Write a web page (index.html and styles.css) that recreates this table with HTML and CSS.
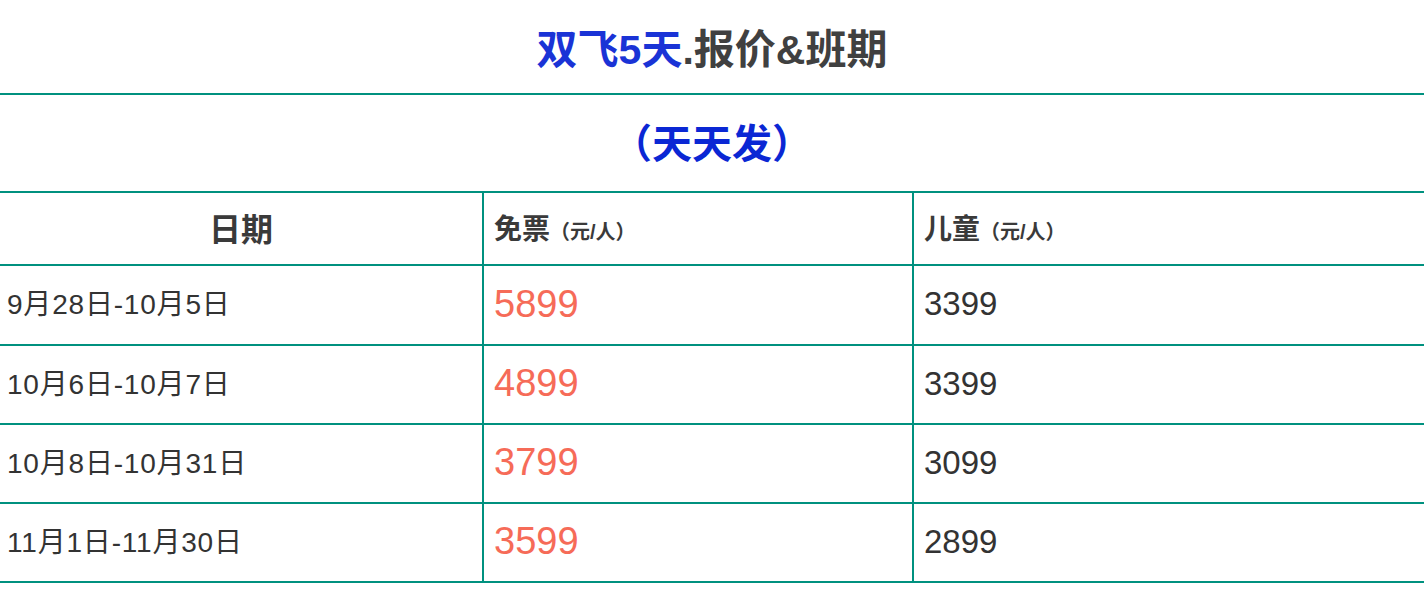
FILE: index.html
```html
<!DOCTYPE html>
<html lang="zh-CN">
<head>
<meta charset="utf-8">
<title>双飞5天.报价&amp;班期</title>
<link rel="stylesheet" href="styles.css">
</head>
<body>
<div class="page">
  <h1 class="title"><span class="blue">双飞5天</span>.报价&amp;班期</h1>
  <table class="price-table">
    <colgroup>
      <col class="c1"><col class="c2"><col class="c3">
    </colgroup>
    <tr class="sub-row"><td colspan="3" class="sub">（天天发）</td></tr>
    <tr class="head-row">
      <th class="center">日期</th>
      <th>免票<small>（元/人）</small></th>
      <th>儿童<small>（元/人）</small></th>
    </tr>
    <tr class="first">
      <td class="date">9月28日-10月5日</td>
      <td class="price">5899</td>
      <td class="kid">3399</td>
    </tr>
    <tr>
      <td class="date">10月6日-10月7日</td>
      <td class="price">4899</td>
      <td class="kid">3399</td>
    </tr>
    <tr>
      <td class="date">10月8日-10月31日</td>
      <td class="price">3799</td>
      <td class="kid">3099</td>
    </tr>
    <tr>
      <td class="date">11月1日-11月30日</td>
      <td class="price">3599</td>
      <td class="kid">2899</td>
    </tr>
  </table>
</div>
</body>
</html>
```

FILE: styles.css
```css
* { box-sizing: border-box; }
html, body {
  margin: 0;
  padding: 0;
  background: #fff;
}
body {
  font-family: "Liberation Sans", "Noto Sans CJK SC", sans-serif;
  color: #333;
}
.page {
  width: 1424px;
}
.title {
  margin: 0;
  height: 93px;
  display: flex;
  align-items: center;
  justify-content: center;
  font-size: 41px;
  font-weight: 700;
  color: #404040;
  padding-bottom: 2px;
}
.blue { color: #1a33d6; }
.price-table {
  width: 1424px;
  border-collapse: collapse;
  table-layout: fixed;
}
.c1 { width: 483px; }
.c2 { width: 430px; }
.c3 { width: 511px; }
.price-table td, .price-table th {
  border: 2px solid #00917f;
  padding: 0 0 2px 10px;
  text-align: left;
  vertical-align: middle;
}
.price-table tr > :first-child { border-left: none; }
.price-table tr > :last-child { border-right: none; }
.sub-row td { height: 98px; }
.sub {
  text-align: center !important;
  padding: 0 0 4px 0 !important;
  font-size: 40px;
  font-weight: 700;
  color: #0a27d4;
}
.head-row th {
  height: 73px;
  font-size: 28px;
  font-weight: 700;
  color: #3a3a3a;
  padding-left: 10px;
  padding-bottom: 3px;
}
.head-row th small {
  font-size: 20px;
  font-weight: 700;
}
.head-row th.center { text-align: center; padding: 0 0 3px 0; font-size: 32px; }
.price-table tr:not(.sub-row):not(.head-row) td { height: 79px; }
.price-table tr.first td { height: 80px !important; }
.date {
  font-size: 28px;
  letter-spacing: 0.8px;
  padding-left: 7px !important;
  padding-bottom: 6px !important;
  color: #333;
}
.price {
  font-size: 38px;
  color: #f66b58;
}
.kid {
  font-size: 33px;
  color: #333;
}
```
